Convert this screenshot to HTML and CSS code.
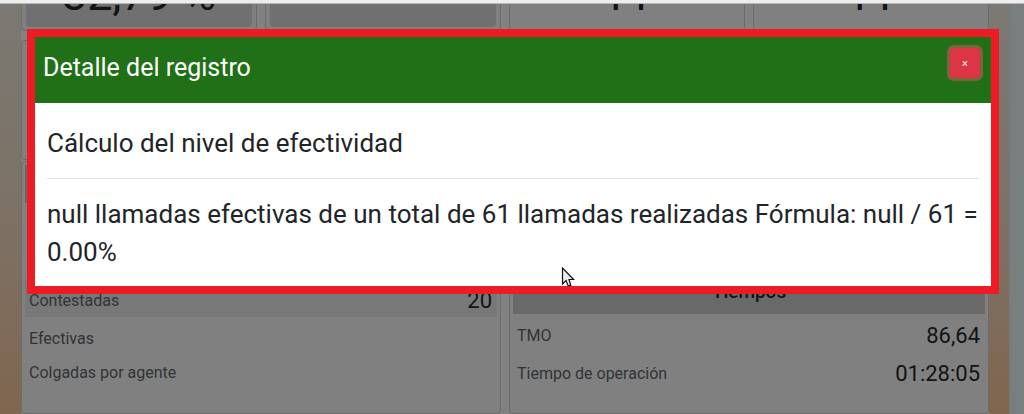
FILE: index.html
```
<!DOCTYPE html>
<html lang="es">
<head>
<meta charset="utf-8">
<meta name="viewport" content="width=device-width, initial-scale=1">
<title>Detalle del registro</title>
<link rel="stylesheet" href="styles.css">
</head>
<body>
<div class="topbar"></div>
<div class="page">
  <main class="dashboard">
    <section class="column">
      <div class="cards">
        <div class="card metric"><div class="metric-value metric-shaded">32,79 %</div></div>
        <div class="card metric"><div class="metric-value metric-shaded"></div></div>
      </div>
      <div class="card chart"></div>
      <div class="card detail">
        <div class="heading"></div>
        <div class="filler"></div>
        <table class="rows">
          <tr class="striped"><th scope="row">Contestadas</th><td>20</td></tr>
          <tr><th scope="row">Efectivas</th><td></td></tr>
          <tr class="short"><th scope="row">Colgadas por agente</th><td></td></tr>
        </table>
      </div>
    </section>
    <section class="column">
      <div class="cards">
        <div class="card metric"><div class="metric-value">11</div></div>
        <div class="card metric"><div class="metric-value">11</div></div>
      </div>
      <div class="card summary"></div>
      <div class="card detail">
        <h2 class="heading">Tiempos</h2>
        <table class="rows times">
          <tr><th scope="row">TMO</th><td>86,64</td></tr>
          <tr><th scope="row">Tiempo de operación</th><td>01:28:05</td></tr>
        </table>
      </div>
    </section>
  </main>
  <div class="gutter"></div>
</div>
<div class="modal" role="dialog" aria-modal="true" aria-labelledby="modal-title">
  <header class="modal-header">
    <h1 class="modal-title" id="modal-title">Detalle del registro</h1>
    <button class="close" type="button" aria-label="Cerrar">×</button>
  </header>
  <div class="modal-body">
    <p class="lead">Cálculo del nivel de efectividad</p>
    <hr class="rule">
    <p class="result">null llamadas efectivas de un total de 61 llamadas realizadas Fórmula: null / 61 = 0.00%</p>
  </div>
</div>
<svg class="pointer" width="14" height="20" viewBox="0 0 14 20" aria-hidden="true">
  <path d="M1.5 1V17L5 13.5L7 18.5H9.8L8 12.5H12.6Z" fill="#ececec" stroke="#111" stroke-width="1.2"/>
</svg>
</body>
</html>
```

FILE: styles.css
```
* {
  box-sizing: border-box;
}

body {
  margin: 0;
  min-height: 100vh;
  display: flex;
  flex-direction: column;
  position: relative;
  overflow: hidden;
  font-family: Roboto, "Liberation Sans", sans-serif;
  font-size: 16px;
  color: #111315;
  background: #808080;
}

.topbar {
  height: 4px;
  background: #efeeee;
  border-bottom: 1px solid #b5b5b5;
}

.page {
  flex: 1;
  display: flex;
  background: linear-gradient(#7b7973, #7d7062 60%, #80664f);
}

.dashboard {
  flex: 1;
  display: grid;
  grid-template-columns: 1fr 1fr;
  gap: 8px;
  margin: 0 20px 0 21px;
  background: #828282;
}

.gutter {
  width: 15px;
  background: #797e7e;
  border-left: 2px solid #747c80;
}

.column {
  display: flex;
  flex-direction: column;
}

.cards {
  display: grid;
  grid-template-columns: 1fr 1fr;
  gap: 8px;
  margin-bottom: 9px;
}

.card {
  border: 1px solid #6c6c6c;
  border-radius: 4px;
  background: #808080;
}

.metric {
  height: 27px;
  padding: 0 4px 3px;
  border-top: 0;
  border-radius: 0 0 4px 4px;
}

.metric-value {
  height: 23px;
  display: flex;
  align-items: flex-end;
  justify-content: center;
  overflow: hidden;
  padding-bottom: 10px;
  border-radius: 0 0 4px 4px;
  font-size: 45px;
  line-height: 45px;
}

.metric-shaded {
  background: #707070;
}

.chart {
  height: 120px;
  margin-bottom: 1px;
}

.summary {
  height: 224px;
  margin-bottom: 8px;
}

.detail {
  flex: 1;
  padding: 3px;
}

.heading {
  height: 38px;
  margin: 0;
  background: #696969;
  font-size: 19px;
  font-weight: 500;
  line-height: 32px;
  text-align: center;
}

.filler {
  height: 76px;
}

.rows {
  width: 100%;
  border-collapse: collapse;
}

.times {
  margin-top: 2px;
}

.rows tr {
  height: 38px;
}

.rows .striped {
  background: #787878;
}

.rows .short {
  height: 30px;
}

.rows th {
  padding: 4px 4px 0;
  font-weight: 400;
  color: #303336;
  text-align: left;
}

.times th {
  padding-top: 0;
}

.rows td {
  padding: 4px 5px 0;
  font-size: 22px;
  text-align: right;
}

.times td {
  padding-top: 0;
}

.modal {
  position: absolute;
  top: 29px;
  left: 27px;
  right: 25px;
  border: 8px solid #ed1c24;
  background: #fff;
  color: #212529;
}

.modal-header {
  display: flex;
  align-items: flex-start;
  justify-content: space-between;
  padding: 11px 11px 15px 8px;
  background: #1f7017;
  color: #fff;
}

.modal-title {
  margin: 0;
  font-size: 25px;
  font-weight: 400;
  line-height: 40px;
}

.close {
  width: 30px;
  height: 30px;
  padding: 0;
  border: 0;
  border-radius: 4px;
  background: #dc3545;
  box-shadow: 0 0 0 3px rgba(225, 83, 97, 0.5);
  color: #fff;
  font-family: inherit;
  font-size: 11px;
}

.modal-body {
  padding: 21px 12px 15px;
  font-size: 26px;
  line-height: 38px;
}

.lead,
.result {
  margin: 0;
}

.rule {
  margin: 16px 0;
  border: 0;
  border-top: 1px solid #e3e3e3;
}

.pointer {
  position: absolute;
  top: 267px;
  left: 561px;
}
```
